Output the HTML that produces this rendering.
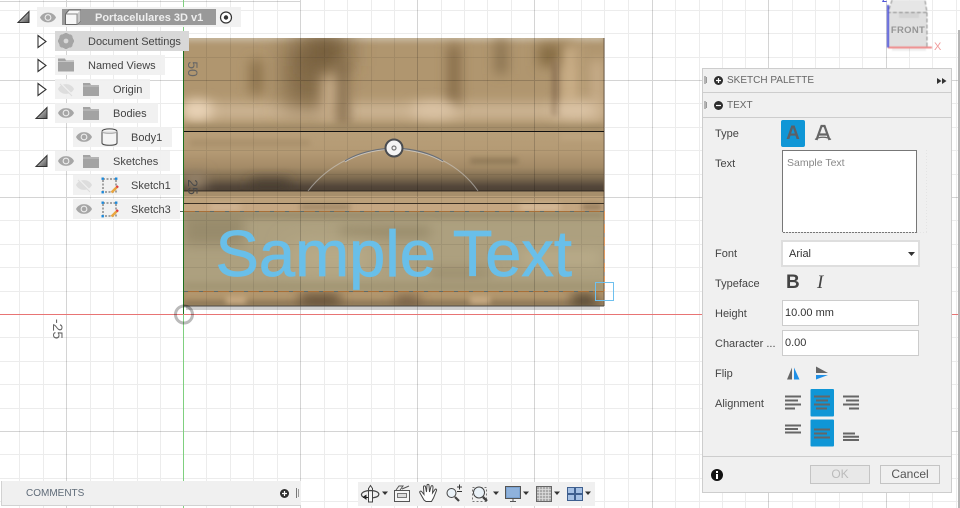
<!DOCTYPE html>
<html><head><meta charset="utf-8"><style>
html,body{margin:0;padding:0;background:#fff}
#r{position:relative;width:960px;height:508px;overflow:hidden;background:#fff;font-family:"Liberation Sans",Arial,sans-serif;font-size:11px;color:#444}
#r>svg{position:absolute;left:0;top:0}
.a{position:absolute}
.row{position:absolute;height:20px;line-height:20px;background:rgba(240,240,240,.95)}
.t{position:absolute;line-height:14px;white-space:nowrap}
.inp{position:absolute;box-sizing:border-box;background:#fff;border:1px solid #ccc;line-height:25px;padding-left:2px;font-size:11px;color:#333}
.v{position:absolute;transform:rotate(90deg);transform-origin:center;font-size:14px;color:#666;line-height:14px;white-space:nowrap}
</style></head><body><div id="r">

<svg width="960" height="508" viewBox="0 0 960 508">
<defs>
<filter id="b2" filterUnits="userSpaceOnUse" x="100" y="0" width="600" height="400"><feGaussianBlur stdDeviation="3"/></filter>
<filter id="b4" filterUnits="userSpaceOnUse" x="100" y="0" width="600" height="400"><feGaussianBlur stdDeviation="6"/></filter>
<filter id="b8" filterUnits="userSpaceOnUse" x="100" y="0" width="600" height="400"><feGaussianBlur stdDeviation="12"/></filter>
<linearGradient id="mid" x1="0" y1="0" x2="0" y2="1"><stop offset="0" stop-color="#b89f79"/><stop offset=".35" stop-color="#b49a74"/><stop offset=".6" stop-color="#a48b67"/><stop offset=".78" stop-color="#7e6b50"/><stop offset=".92" stop-color="#54473a"/><stop offset="1" stop-color="#4d4135"/></linearGradient>
<clipPath id="c1"><rect x="184" y="38" width="420" height="93"/></clipPath>
<clipPath id="c2"><rect x="184" y="131" width="420" height="60"/></clipPath>
<clipPath id="c3"><rect x="184" y="191" width="420" height="20"/></clipPath>
<clipPath id="c4"><rect x="184" y="211" width="420" height="80"/></clipPath>
<clipPath id="c5"><rect x="184" y="291" width="420" height="15"/></clipPath>
</defs>

<!-- shadow under body -->
<rect x="186" y="306" width="414" height="4" fill="#cfcfcf"/>

<!-- top wood band -->
<rect x="184" y="38" width="420" height="93" fill="#b0966f"/>
<g clip-path="url(#c1)">
<rect x="184" y="35" width="420" height="6" fill="#cbbda6" filter="url(#b2)"/>
<rect x="184" y="103" width="420" height="16" fill="#cdb594" filter="url(#b4)"/>
<ellipse cx="197" cy="110" rx="16" ry="10" fill="#ead4b8" filter="url(#b4)"/>
<rect x="284" y="42" width="46" height="66" fill="#846c49" filter="url(#b8)"/>
<rect x="305" y="36" width="44" height="30" fill="#6f5838" filter="url(#b8)"/>
<rect x="322" y="76" width="24" height="44" fill="#c5aa87" filter="url(#b4)"/>
<rect x="338" y="62" width="10" height="64" fill="#7d6544" filter="url(#b4)"/>
<rect x="250" y="60" width="12" height="34" fill="#8a7049" filter="url(#b4)"/>
<rect x="448" y="45" width="12" height="60" fill="#846b47" filter="url(#b4)"/>
<rect x="495" y="40" width="12" height="34" fill="#8a7250" filter="url(#b4)"/>
<rect x="538" y="44" width="34" height="22" fill="#876d45" filter="url(#b4)"/>
<rect x="552" y="60" width="8" height="55" fill="#8a7051" filter="url(#b2)"/>
<rect x="562" y="45" width="16" height="60" fill="#ccb089" filter="url(#b4)"/>
<rect x="590" y="60" width="14" height="60" fill="#c8ad8a" filter="url(#b4)"/>
<rect x="184" y="125" width="420" height="6" fill="#a08a66" filter="url(#b2)"/>
<ellipse cx="434" cy="110" rx="24" ry="8" fill="#dcc4a6" filter="url(#b4)"/>
<ellipse cx="575" cy="110" rx="24" ry="8" fill="#dcc4a6" filter="url(#b4)"/>
</g>

<!-- mid band -->
<rect x="184" y="131" width="420" height="60" fill="url(#mid)"/>
<g clip-path="url(#c2)">
<rect x="190" y="140" width="120" height="6" fill="#a88f6a" filter="url(#b2)"/>
<rect x="470" y="159" width="48" height="4" fill="#84704f" filter="url(#b2)"/>
<rect x="560" y="134" width="44" height="5" fill="#c0a681" filter="url(#b2)"/>
<rect x="250" y="180" width="40" height="10" fill="#453a2d" filter="url(#b4)"/>
<rect x="184" y="172" width="22" height="16" fill="#94826a" filter="url(#b4)"/>
</g>

<!-- thin bands -->
<rect x="184" y="191" width="420" height="20" fill="#b89d78"/>
<g clip-path="url(#c3)">
<rect x="184" y="192" width="420" height="4" fill="#a78f6c"/>
<rect x="184" y="196" width="420" height="7" fill="#bca17b"/>
<rect x="184" y="204" width="420" height="7" fill="#c5a782"/>
<rect x="210" y="204" width="30" height="6" fill="#d2b594" filter="url(#b2)"/>
<rect x="300" y="204" width="50" height="6" fill="#9e8766" filter="url(#b2)"/>
<rect x="520" y="204" width="40" height="6" fill="#d8bc9a" filter="url(#b2)"/>
<rect x="582" y="204" width="20" height="6" fill="#93795a" filter="url(#b2)"/>
</g>

<!-- sketch profile band -->
<rect x="184" y="211" width="420" height="80" fill="#ada07f"/>
<g clip-path="url(#c4)">
<rect x="184" y="211" width="420" height="8" fill="#9c8e6d" filter="url(#b2)"/>
<rect x="184" y="215" width="60" height="30" fill="#988b6c" filter="url(#b4)"/>
<rect x="340" y="228" width="90" height="8" fill="#8f8262" filter="url(#b4)"/>
<rect x="290" y="245" width="80" height="24" fill="#bbad8a" filter="url(#b8)"/>
<rect x="430" y="270" width="60" height="6" fill="#8e8162" filter="url(#b4)"/>
<rect x="520" y="250" width="80" height="16" fill="#b8aa88" filter="url(#b4)"/>
<rect x="184" y="282" width="420" height="9" fill="#a39675" filter="url(#b2)"/>
</g>

<!-- bottom band -->
<rect x="184" y="291" width="420" height="15" fill="#ab9068"/>
<g clip-path="url(#c5)">
<rect x="184" y="292" width="420" height="4" fill="#b99b72" filter="url(#b2)"/>
<rect x="184" y="302" width="420" height="4" fill="#7e6a50" filter="url(#b2)"/>
<rect x="300" y="294" width="40" height="12" fill="#5f4c36" filter="url(#b4)"/>
<rect x="395" y="296" width="24" height="10" fill="#70593f" filter="url(#b4)"/>
<rect x="572" y="294" width="24" height="12" fill="#4e3f2f" filter="url(#b4)"/>
<rect x="226" y="296" width="20" height="8" fill="#c8aa82" filter="url(#b2)"/>
<rect x="470" y="296" width="20" height="8" fill="#c8ab84" filter="url(#b2)"/>
</g>
<rect x="603.5" y="38" width="1" height="268" fill="#6f5c45"/>

<!-- grid -->
<path d="M19.5 0V508M43.5 0V508M90.5 0V508M113.5 0V508M137.5 0V508M160.5 0V508M206.5 0V508M230.5 0V508M253.5 0V508M277.5 0V508M324.5 0V508M347.5 0V508M371.5 0V508M394.5 0V508M441.5 0V508M464.5 0V508M487.5 0V508M511.5 0V508M558.5 0V508M581.5 0V508M604.5 0V508M628.5 0V508M675.5 0V508M699.5 0V508M722.5 0V508M745.5 0V508M792.5 0V508M815.5 0V508M839.5 0V508M862.5 0V508M909.5 0V508M932.5 0V508M956.5 0V508M0 10.5H960M0 33.5H960M0 57.5H960M0 103.5H960M0 127.5H960M0 150.5H960M0 174.5H960M0 220.5H960M0 244.5H960M0 267.5H960M0 291.5H960M0 337.5H960M0 361.5H960M0 384.5H960M0 408.5H960M0 454.5H960M0 478.5H960M0 501.5H960" stroke="#000" stroke-opacity=".075" fill="none"/>
<path d="M66.5 0V508M300.5 0V508M417.5 0V508M534.5 0V508M652.5 0V508M768.5 0V508M886.5 0V508M0 80.5H960M0 197.5H960M0 431.5H960M0 1.5H300" stroke="#000" stroke-opacity=".17" fill="none"/>

<!-- sketch lines over wood -->
<rect x="184" y="131" width="420" height="1" fill="#111"/>
<rect x="184" y="190.5" width="420" height="1" fill="#2e271f"/>
<rect x="184" y="203" width="420" height="1" fill="#3a3024"/>
<path d="M180 211.5H604" stroke="#a86f38"/>
<path d="M180 211.5H604" stroke="#5e6a68" stroke-dasharray="4 11"/>
<path d="M184 291.5H604" stroke="#a86f38"/>
<path d="M184 291.5H604" stroke="#5e6a68" stroke-dasharray="4 11"/>
<path d="M604.5 211V291" stroke="#e29a60" stroke-dasharray="9 4"/>
<rect x="184" y="305.5" width="420" height="1" fill="#4d4a44"/>

<!-- axes -->
<path d="M0 314.5H960" stroke="#e87474"/>
<path d="M183.5 0V508" stroke="#7fd07f"/>
<path d="M183.5 38V314" stroke="#1d6e1d"/>

<!-- origin -->
<circle cx="184" cy="314.5" r="8.5" fill="none" stroke="#000" stroke-opacity=".27" stroke-width="3"/>

<!-- arc + handle -->
<path d="M308 191C328 165 360 149 394 148C428 149 460 165 478 191" fill="none" stroke="#cfcfcf" stroke-opacity=".55" stroke-width="1"/>
<path d="M345 161C358 153 374 149 394 148C414 149 430 153 443 161" fill="none" stroke="#6a6e74" stroke-width="1.4"/>
<path d="M345 162C358 154 374 150 394 149C414 150 430 154 443 162" fill="none" stroke="#d8d8d8" stroke-opacity=".7" stroke-width="1"/>
<circle cx="394" cy="148" r="8.5" fill="#f4f4f4" stroke="#4a4c50" stroke-width="2"/>
<circle cx="394" cy="148" r="2" fill="none" stroke="#777" stroke-width="1.2"/>

<!-- selection box -->
<rect x="595.5" y="282.5" width="18" height="18" fill="none" stroke="#6ec0ee"/>

<!-- viewcube -->
<g style="filter:blur(.4px)">
<path d="M889 12.5H927L925 0H892Z" fill="#e6e6e6"/>
<rect x="888" y="12" width="39" height="35" fill="#e0e0e0"/>
<path d="M892 0L888 12.5H927L925 0M888 12.5V47.5M927 12.5V47.5" fill="none" stroke="#8a8a8a" stroke-dasharray="4 2"/>
<rect x="899" y="13" width="20" height="5" fill="#d4d4d4"/>
<rect x="892" y="48" width="34" height="3" fill="#000" opacity=".06"/>
<path d="M888 47.5H932" stroke="#ee8c8c" stroke-width="2"/>
<path d="M888 47.5V5" stroke="#4f55d8" stroke-width="2"/>
</g>
</svg>

<div class="a" style="left:885px;top:25px;width:46px;text-align:center;font-size:9.5px;font-weight:bold;letter-spacing:.3px;color:#959595;line-height:12px">FRONT</div>
<div class="a" style="left:934px;top:41px;font-size:11px;color:#f09a9a;line-height:12px">X</div>
<div class="a" style="left:882px;top:-5px;font-size:8px;font-weight:bold;color:#4f55d8;line-height:10px">Z</div>
<div class="a" style="left:958px;top:30px;width:2px;height:478px;background:#b5b5b5"></div>

<div class="v" style="left:183px;top:62px;width:20px;height:14px;text-align:center">50</div>
<div class="v" style="left:183px;top:180px;width:20px;height:14px;text-align:center;color:#4a4a4a">25</div>
<div class="v" style="left:44px;top:322px;width:28px;height:14px;text-align:center">-25</div>

<div class="a" style="left:215.5px;top:216px;font-size:65px;line-height:75px;color:#69bfe9;-webkit-text-stroke:.8px #69bfe9;white-space:nowrap">Sample Text</div>

<!-- browser tree -->
<div class="row" style="left:37px;top:7px;width:204px"></div>
<div class="row" style="left:62px;top:9px;width:154px;height:16px;background:#999"></div>
<div class="row" style="left:55px;top:31px;width:134px;background:#d8d8d8"></div>
<div class="row" style="left:55px;top:55px;width:110px"></div>
<div class="row" style="left:55px;top:79px;width:95px"></div>
<div class="row" style="left:55px;top:103px;width:103px"></div>
<div class="row" style="left:73px;top:127px;width:99px"></div>
<div class="row" style="left:55px;top:151px;width:115px"></div>
<div class="row" style="left:73px;top:175px;width:107px"></div>
<div class="row" style="left:73px;top:199px;width:107px"></div>

<div class="t" style="left:95px;top:10.5px;font-weight:bold;color:#eee">Portacelulares 3D v1</div>
<div class="t" style="left:88px;top:35px;color:#444">Document Settings</div>
<div class="t" style="left:88px;top:59px">Named Views</div>
<div class="t" style="left:113px;top:83px">Origin</div>
<div class="t" style="left:113px;top:107px">Bodies</div>
<div class="t" style="left:131px;top:131px">Body1</div>
<div class="t" style="left:113px;top:155px">Sketches</div>
<div class="t" style="left:131px;top:179px">Sketch1</div>
<div class="t" style="left:131px;top:203px">Sketch3</div>

<svg width="300" height="225" viewBox="0 0 300 225">
<defs>
<linearGradient id="tri" x1="0" y1="0" x2="1" y2="1"><stop offset="0" stop-color="#eee"/><stop offset="1" stop-color="#555"/></linearGradient>
<g id="eye"><path d="M-8 0C-5 -6.500 5 -6.500 8 0C5 6.500 -5 6.500 -8 0Z" fill="#a6a6a6"/><circle r="3.400" fill="#ededed"/><circle r="2.300" fill="#a6a6a6"/></g>
<g id="eyeoff" opacity=".6"><path d="M-8 0C-5 -6.500 5 -6.500 8 0C5 6.500 -5 6.500 -8 0Z" fill="#d0d0d0"/><path d="M-6 -6L6 6" stroke="#f0f0f0" stroke-width="2"/><path d="M-6 -5L6 7" stroke="#cfcfcf"/></g>
<g id="fold"><path d="M0 0H7L8 2H16V13H0Z" fill="#a3a3a3"/><path d="M0 3H16" stroke="#ddd" stroke-width=".6"/></g>
<path id="tdown" d="M0 11L11 0V11Z" fill="url(#tri)" stroke="#333"/>
<path id="tright" d="M0 0L8 6L0 12Z" fill="#fff" stroke="#333" stroke-width="1.100"/>
<g id="sk"><rect x="0.5" y="0.5" width="13" height="13" fill="none" stroke="#555" stroke-dasharray="2 1.500"/><rect x="-1" y="-1" width="2.400" height="2.400" fill="#1c88d8"/><rect x="12.500" y="-1" width="2.400" height="2.400" fill="#1c88d8"/><rect x="-1" y="12.500" width="2.400" height="2.400" fill="#1c88d8"/><path d="M9 14L14 9" stroke="#e9a540" stroke-width="2.500"/><path d="M14 9L15.500 7.500" stroke="#e04040" stroke-width="2.500"/></g>
</defs>

<use href="#tdown" x="18" y="11.500"/>
<use href="#eye" x="48" y="17.500"/>
<path d="M65.500 14L69 10H80.500V21L77 24.500H65.500Z" fill="#f6f6f6" stroke="#666"/><path d="M77 14L80.500 10V21L77 24.500Z" fill="#c8c8c8"/><path d="M65.500 14H77V24.500" fill="none" stroke="#888"/>
<circle cx="226" cy="17.500" r="5.500" fill="#fff" stroke="#333" stroke-width="1.200"/><circle cx="226" cy="17.500" r="2.200" fill="#333"/>

<use href="#tright" x="38" y="35.500"/>
<g transform="translate(66,41)"><circle r="5.500" fill="none" stroke="#a5a5a5" stroke-width="4"/><path d="M0 -8V8M-8 0H8M-5.700 -5.700L5.700 5.700M-5.700 5.700L5.700 -5.700" stroke="#a5a5a5" stroke-width="2.800"/><circle r="2.400" fill="#d8d8d8"/></g>

<use href="#tright" x="38" y="59.500"/>
<use href="#fold" x="58" y="58.500"/>

<use href="#tright" x="38" y="83.500"/>
<use href="#eyeoff" x="66" y="89"/>
<use href="#fold" x="83" y="83"/>

<use href="#tdown" x="36" y="107.500"/>
<use href="#eye" x="66" y="113"/>
<use href="#fold" x="83" y="107"/>

<use href="#eye" x="84" y="137"/>
<path d="M102 131.500C102 128 117 128 117 131.500V143C117 146 102 146 102 143Z" fill="#f4f4f4" stroke="#444"/><path d="M102 131.500C102 134 117 134 117 131.500" fill="#ddd" stroke="#aaa"/>

<use href="#tdown" x="36" y="155.500"/>
<use href="#eye" x="66" y="161"/>
<use href="#fold" x="83" y="155"/>

<use href="#eyeoff" x="84" y="185"/>
<use href="#sk" x="102.500" y="178.500"/>

<use href="#eye" x="84" y="209"/>
<use href="#sk" x="102.500" y="202.500"/>
</svg>

<!-- comments panel -->
<div class="a" style="left:1px;top:481px;width:299px;height:24px;background:#f0f0f0;border:1px solid #d2d2d2;border-top:0;border-right:0"></div>
<div class="t" style="left:26px;top:487px;font-size:10px;color:#5f6b78">COMMENTS</div>
<svg width="960" height="508" viewBox="0 0 960 508">
<circle cx="284.500" cy="493.500" r="4.500" fill="#2e2e2e"/><path d="M282 493.500H287M284.500 491V496" stroke="#fff" stroke-width="1.200"/>
<path d="M296.500 488V498" stroke="#777"/><path d="M298.500 489V497" stroke="#999"/>
</svg>

<!-- toolbar -->
<div class="a" style="left:358px;top:482px;width:237px;height:24px;background:#f0f0f0"></div>
<svg width="960" height="508" viewBox="0 0 960 508" fill="none">
<!-- orbit -->
<path d="M368.500 488.500L370.500 485.500L372.500 488.500M368.500 488V502H372.500V488" stroke="#444" fill="#f6f6f6"/>
<path d="M363 497C359.500 494.500 362 491 370 490.500C376 490.500 380 492.500 378.500 495.500C377.500 497 375 497.500 373 497.800" stroke="#444" stroke-width="1.200"/>
<path d="M366.500 494.500L362.500 497L366.500 500Z" fill="#222"/>
<path d="M363 497.500H368" stroke="#222"/>
<!-- look at -->
<g><rect x="394.500" y="490.500" width="15" height="11" stroke="#555" fill="#f6f6f6"/><rect x="397.500" y="493.500" width="9" height="4" stroke="#777" fill="#ddd"/><path d="M396 490L399 486H403L400 490M402 489L409 486" stroke="#555"/></g>
<!-- hand -->
<path d="M424 500L420 493C419 491 421 490.500 422 492L424 494.500L423.500 487C423.500 485.500 425.500 485.500 425.500 487L426.500 492L427 485.500C427 484 429 484 429 485.500L429.500 492L431 486.500C431.500 485 433 485.500 433 487L432.500 493L435 489.500C436 488.500 437 489.500 436.500 490.500L433.500 498L431.500 501.500H426Z" fill="#fff" stroke="#444" stroke-width="1"/>
<!-- zoom -->
<g><circle cx="451.500" cy="493" r="4.500" stroke="#444" fill="#eaf2f8"/><path d="M455 497L459 501" stroke="#444" stroke-width="2.200"/><path d="M457 487H462M459.500 484.500V489.500M457 491.500H462" stroke="#333"/></g>
<!-- fit -->
<g><rect x="472.500" y="487.500" width="14" height="14" stroke="#777" stroke-dasharray="2 2"/><circle cx="479" cy="492.500" r="5.500" stroke="#444" fill="#eaf2f8"/><path d="M483 497L487 501" stroke="#444" stroke-width="2.400"/></g>
<!-- display -->
<g><rect x="505.500" y="486.500" width="15" height="12" stroke="#555" fill="#7ba3d2"/><rect x="507" y="488" width="12" height="9" fill="#8fb2dc"/><path d="M510 501.500H516M513 499V501" stroke="#555"/></g>
<!-- grid -->
<g><rect x="536.500" y="486.500" width="15" height="15" fill="#aaa" stroke="#666"/><path d="M539.500 487V501M542.500 487V501M545.500 487V501M548.500 487V501M537 489.500H551M537 492.500H551M537 495.500H551M537 498.500H551" stroke="#e0e0e0" stroke-width=".7"/></g>
<!-- viewports -->
<g fill="#a5c0e4" stroke="#3e5f8f"><rect x="567.500" y="487.500" width="7" height="6"/><rect x="575.500" y="487.500" width="7" height="6"/><rect x="567.500" y="494.500" width="7" height="6"/><rect x="575.500" y="494.500" width="7" height="6"/></g>
<!-- carets -->
<g fill="#333"><path d="M382 491.500H388L385 495Z"/><path d="M493 491.500H499L496 495Z"/><path d="M523 491.500H529L526 495Z"/><path d="M554 491.500H560L557 495Z"/><path d="M585 491.500H591L588 495Z"/></g>
</svg>

<!-- panel -->
<div class="a" style="left:702px;top:68px;width:248px;height:423px;background:#f0f0f0;border:1px solid #cdcdcd"></div>
<div class="a" style="left:703px;top:92px;width:248px;height:1px;background:#cdcdcd"></div>
<div class="a" style="left:703px;top:117px;width:248px;height:1px;background:#cdcdcd"></div>
<div class="a" style="left:703px;top:456px;width:248px;height:1px;background:#cdcdcd"></div>

<div class="t" style="left:727px;top:74px;font-size:10px;color:#666">SKETCH PALETTE</div>
<div class="t" style="left:727px;top:99px;font-size:10px;color:#666">TEXT</div>

<div class="t" style="left:715px;top:127px">Type</div>
<div class="t" style="left:715px;top:157px">Text</div>
<div class="t" style="left:715px;top:247px">Font</div>
<div class="t" style="left:715px;top:277px">Typeface</div>
<div class="t" style="left:715px;top:307px">Height</div>
<div class="t" style="left:715px;top:337px">Character ...</div>
<div class="t" style="left:715px;top:367px">Flip</div>
<div class="t" style="left:715px;top:397px">Alignment</div>

<div class="a" style="left:781px;top:120px;width:24px;height:27px;background:#0f96d6;border-radius:2px"></div>
<div class="a" style="left:781px;top:120px;width:24px;line-height:27px;text-align:center;font-size:19px;font-weight:bold;color:#5c6066">A</div>

<div class="a" style="left:782px;top:150px;width:135px;height:83px;box-sizing:border-box;background:#fff;border:1px solid #777;padding:6px 4px;font-size:10.500px;color:#888">Sample Text</div>

<div class="a" style="left:781px;top:240px;width:139px;height:27px;box-sizing:border-box;background:#fff;border:2px solid #dedede;line-height:24px;padding-left:6px;color:#333">Arial</div>

<div class="inp" style="left:782px;top:300px;width:137px;height:26px">10.00 mm</div>
<div class="inp" style="left:782px;top:330px;width:137px;height:26px">0.00</div>

<div class="a" style="left:810px;top:465px;width:60px;height:19px;box-sizing:border-box;background:#e8e8e8;border:1px solid #c4c4c4;line-height:17px;text-align:center;font-size:12px;color:#bbb">OK</div>
<div class="a" style="left:880px;top:465px;width:60px;height:19px;box-sizing:border-box;background:#f0f0f0;border:1px solid #c4c4c4;line-height:17px;text-align:center;font-size:12px;color:#555">Cancel</div>

<div class="a" style="left:786px;top:273px;font-size:19px;font-weight:bold;line-height:20px;color:#444">B</div>
<div class="a" style="left:817px;top:273px;font-size:19px;font-style:italic;line-height:20px;font-family:'Liberation Serif',serif;color:#444">I</div>

<svg width="960" height="508" viewBox="0 0 960 508">
<path d="M705 76V84" stroke="#777"/><path d="M706.500 77V83" stroke="#999"/>
<path d="M705 101V109" stroke="#777"/><path d="M706.500 102V108" stroke="#999"/>
<circle cx="718.500" cy="80.500" r="4.500" fill="#2e2e2e"/><path d="M716 80.500H721M718.500 78V83" stroke="#fff" stroke-width="1.200"/>
<circle cx="718.500" cy="105.500" r="4.500" fill="#2e2e2e"/><path d="M716 105.500H721" stroke="#fff" stroke-width="1.200"/>
<path d="M937 78V84L941.500 81ZM942 78V84L946.500 81Z" fill="#333"/>

<!-- outline A -->
<path d="M816.500 140L821.500 126H824.500L829.500 140M819 134.500H827" fill="none" stroke="#666" stroke-width="2.200"/>
<path d="M815 139.500C819 136.500 827 136.500 831 139.500" fill="none" stroke="#666" stroke-width="1.200"/>

<!-- select caret -->
<path d="M908 252H915L911.500 256Z" fill="#333"/>
<!-- dotted outline -->
<path d="M782 232.500H927M926.500 150V233" stroke="#e4e4e4" stroke-dasharray="1 2" fill="none"/>

<!-- flip -->
<path d="M792 367.500L787 379.500H792Z" fill="#666"/><path d="M794 367.500L799.500 379.500H794Z" fill="#1f8fe6"/>
<path d="M816 366.500V373L828 373Z" fill="#666"/><path d="M816 375H828L816 379.500Z" fill="#1f8fe6"/>

<!-- alignment -->
<rect x="810.500" y="389" width="23.500" height="27.500" fill="#0f96d6" rx="1"/>
<rect x="810.500" y="419.500" width="23.500" height="27" fill="#0f96d6" rx="1"/>
<path d="M785 396.500H801M785 400.500H798M785 404.500H801M785 408.500H795" stroke="#666" stroke-width="2"/>
<path d="M814 396.500H830M816 400.500H828M814 404.500H830M816 408.500H827" stroke="#666" stroke-width="2"/>
<path d="M843 396.500H859M846 400.500H859M843 404.500H859M849 408.500H859" stroke="#666" stroke-width="2"/>
<path d="M785 425.500H801M785 429H798M785 432.500H801" stroke="#666" stroke-width="2"/>
<path d="M814 429.500H830M814 433.500H827M814 437.500H830" stroke="#666" stroke-width="2"/>
<path d="M843 433.500H855M843 436.800H859M843 440H859" stroke="#666" stroke-width="2"/>

<!-- info -->
<circle cx="717" cy="475" r="6" fill="#111"/>
<rect x="716" y="471" width="2" height="2" fill="#fff"/><rect x="716" y="474" width="2" height="5" fill="#fff"/>
</svg>

</div></body></html>
